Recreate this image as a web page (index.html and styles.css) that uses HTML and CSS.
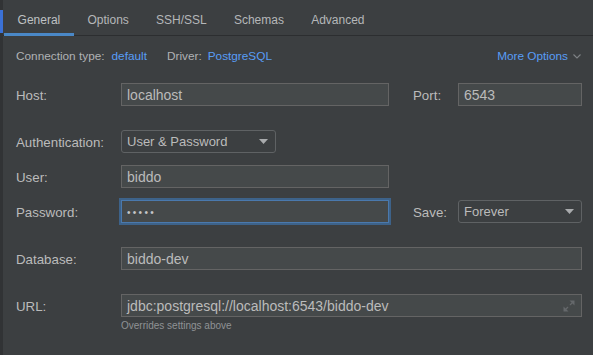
FILE: index.html
```html
<!DOCTYPE html>
<html>
<head>
<meta charset="utf-8">
<link rel="stylesheet" href="styles.css">
</head>
<body>
<div class="window">
  <div class="strip"><div class="strip-mark"></div></div>
  <div class="main">
    <nav class="tabs">
      <div class="tab active">General</div>
      <div class="tab">Options</div>
      <div class="tab">SSH/SSL</div>
      <div class="tab">Schemas</div>
      <div class="tab">Advanced</div>
    </nav>
    <div class="content">
      <div class="conn-row">
        <span>Connection type:</span>
        <span class="link link-type">default</span>
        <span class="driver">Driver:</span>
        <span class="link link-driver">PostgreSQL</span>
        <span class="link more">More Options</span>
        <svg class="chev" width="8" height="5" viewBox="0 0 8 5"><polyline points="0.5,0.5 4,4 7.5,0.5" fill="none" stroke="#7f8386" stroke-width="1.1"/></svg>
      </div>

      <div class="row row-host">
        <div class="label">Host:</div>
        <div class="input w-short">localhost</div>
        <div class="label side-label">Port:</div>
        <div class="input side-field">6543</div>
      </div>

      <div class="row row-gap">
        <div class="label">Authentication:</div>
        <div class="select w-auth">
          <span>User &amp; Password</span>
          <svg width="9" height="5" viewBox="0 0 9 5"><polygon points="0,0 9,0 4.5,5" fill="#a9abad"/></svg>
        </div>
      </div>

      <div class="row row-tight">
        <div class="label">User:</div>
        <div class="input w-short">biddo</div>
      </div>

      <div class="row row-tight">
        <div class="label">Password:</div>
        <div class="input w-short focused"><span class="dots">•••••</span></div>
        <div class="label side-label">Save:</div>
        <div class="select side-field">
          <span>Forever</span>
          <svg width="9" height="5" viewBox="0 0 9 5"><polygon points="0,0 9,0 4.5,5" fill="#a9abad"/></svg>
        </div>
      </div>

      <div class="row row-gap">
        <div class="label">Database:</div>
        <div class="input grow">biddo-dev</div>
      </div>

      <div class="row row-gap">
        <div class="label">URL:</div>
        <div class="input grow url">
          <span>jdbc:postgresql://localhost:6543/biddo-dev</span>
          <svg width="12" height="12" viewBox="0 0 12 12">
            <polygon points="6.5,0.5 11.5,0.5 11.5,5.5" fill="#65686b"/>
            <line x1="9.5" y1="2.5" x2="7" y2="5" stroke="#65686b" stroke-width="1.2"/>
            <polygon points="0.5,6.5 0.5,11.5 5.5,11.5" fill="#65686b"/>
            <line x1="2.5" y1="9.5" x2="5" y2="7" stroke="#65686b" stroke-width="1.2"/>
          </svg>
        </div>
      </div>
      <div class="hint">Overrides settings above</div>
    </div>
  </div>
</div>
</body>
</html>
```

FILE: styles.css
```css
html, body {
  margin: 0;
  padding: 0;
  background: #3c3f41;
}

body {
  font-family: "Liberation Sans", Arial, sans-serif;
  color: #bbbbbb;
}

.window {
  display: flex;
  width: 593px;
  height: 355px;
  overflow: hidden;
}

.strip {
  flex: none;
  width: 3px;
  background: #313335;
  padding-top: 10px;
  box-sizing: border-box;
}

.strip-mark {
  height: 23px;
  background: #3b71d6;
}

.main {
  flex: 1;
  display: flex;
  flex-direction: column;
}

.tabs {
  display: flex;
  height: 35px;
  border-bottom: 1px solid #2c2e30;
  padding-left: 1px;
}

.tab {
  position: relative;
  padding: 5px 13.6px 0;
  line-height: 30px;
  font-size: 12px;
  color: #b5b7b9;
  white-space: nowrap;
}

.tab.active {
  color: #bfc1c3;
}

.tab.active::after {
  content: "";
  position: absolute;
  left: 0;
  right: 0;
  bottom: -1px;
  height: 3px;
  background: #4a88c7;
}

.content {
  padding: 0 11px 0 13px;
  display: flex;
  flex-direction: column;
}

.conn-row {
  display: flex;
  align-items: center;
  height: 20px;
  margin-top: 10px;
  font-size: 11.8px;
  color: #b0b2b4;
  white-space: nowrap;
}

.link {
  color: #589df6;
}

.link-type {
  margin-left: 7px;
}

.driver {
  margin-left: 20px;
}

.link-driver {
  margin-left: 6px;
}

.more {
  margin-left: auto;
}

.chev {
  margin-left: 5px;
  margin-right: 1px;
}

.row {
  display: flex;
  align-items: center;
  height: 23px;
}

.row-host {
  margin-top: 17px;
}

.row-gap {
  margin-top: 24px;
}

.row-tight {
  margin-top: 12px;
}

.label {
  flex: 0 0 105px;
  font-size: 13.3px;
  color: #bbbbbb;
  white-space: nowrap;
  padding-top: 1px;
}

.input {
  box-sizing: border-box;
  height: 23px;
  background: #45494a;
  border: 1px solid #646464;
  padding: 1px 5px 0;
  display: flex;
  align-items: center;
  font-size: 14px;
  color: #bbbbbb;
  white-space: nowrap;
  overflow: hidden;
}

.w-short {
  width: 268px;
  flex: none;
}

.grow {
  flex: 1;
}

.side-label {
  margin-left: 24px;
  flex: 0 0 45px;
}

.side-field {
  flex: 1;
}

.focused {
  border-color: #4a79ad;
  box-shadow: 0 0 0 2px #3d6289;
}

.dots {
  font-size: 10px;
  letter-spacing: 2.3px;
  color: #c4c6c8;
}

.select {
  box-sizing: border-box;
  height: 23px;
  border: 1px solid #5f6264;
  border-radius: 3px;
  background: #3c3f41;
  display: flex;
  align-items: center;
  justify-content: space-between;
  padding: 0 7px 0 5px;
  font-size: 13px;
  color: #bbbbbb;
  white-space: nowrap;
}

.w-auth {
  width: 155px;
  flex: none;
}

.url {
  justify-content: space-between;
  padding-right: 6px;
}

.url svg {
  flex: none;
}

.hint {
  margin-top: 3px;
  margin-left: 105px;
  font-size: 10px;
  line-height: 12px;
  color: #8f9295;
}
```
